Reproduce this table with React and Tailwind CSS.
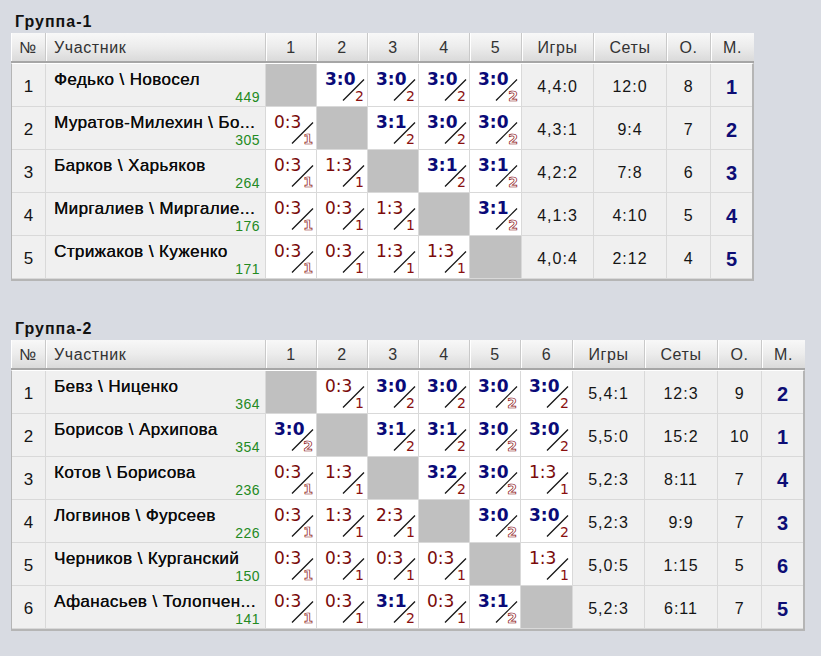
import React from 'react';

const group1 = [
  ['Федько \\ Новосел', '449', ['x', '3:0 2', '3:0 2', '3:0 2', '3:0 2*'], '4,4:0', '12:0', '8', '1'],
  ['Муратов-Милехин \\ Бо...', '305', ['0:3 1*', 'x', '3:1 2', '3:0 2', '3:0 2*'], '4,3:1', '9:4', '7', '2'],
  ['Барков \\ Харьяков', '264', ['0:3 1*', '1:3 1', 'x', '3:1 2', '3:1 2*'], '4,2:2', '7:8', '6', '3'],
  ['Миргалиев \\ Миргалие...', '176', ['0:3 1*', '0:3 1', '1:3 1', 'x', '3:1 2*'], '4,1:3', '4:10', '5', '4'],
  ['Стрижаков \\ Куженко', '171', ['0:3 1*', '0:3 1', '1:3 1', '1:3 1', 'x'], '4,0:4', '2:12', '4', '5'],
];

const group2 = [
  ['Бевз \\ Ниценко', '364', ['x', '0:3 1', '3:0 2', '3:0 2', '3:0 2*', '3:0 2'], '5,4:1', '12:3', '9', '2'],
  ['Борисов \\ Архипова', '354', ['3:0 2*', 'x', '3:1 2', '3:1 2', '3:0 2*', '3:0 2'], '5,5:0', '15:2', '10', '1'],
  ['Котов \\ Борисова', '236', ['0:3 1*', '1:3 1', 'x', '3:2 2', '3:0 2*', '1:3 1'], '5,2:3', '8:11', '7', '4'],
  ['Логвинов \\ Фурсеев', '226', ['0:3 1*', '1:3 1', '2:3 1', 'x', '3:0 2*', '3:0 2'], '5,2:3', '9:9', '7', '3'],
  ['Черников \\ Курганский', '150', ['0:3 1*', '0:3 1', '0:3 1', '0:3 1', 'x', '1:3 1'], '5,0:5', '1:15', '5', '6'],
  ['Афанасьев \\ Толопчен...', '141', ['0:3 1*', '0:3 1', '3:1 2', '0:3 1', '3:1 2*', 'x'], '5,2:3', '6:11', '7', '5'],
];

const ScoreCell = ({ value }) => {
  if (value === 'x') {
    return <div className="w-full h-[43px] bg-[#c0c0c0] border-r border-b border-[#d9d9d9]" />;
  }
  const [score, pt] = value.split(' ');
  const outlined = pt.endsWith('*');
  const digit = pt[0];
  const win = score.startsWith('3');
  return (
    <div className="relative w-full h-[43px] bg-white border-r border-b border-[#d9d9d9] font-['DejaVu_Sans',sans-serif]">
      <span
        className={`absolute left-[8px] top-[4px] text-[17px] leading-[22px] ${
          win ? 'font-bold text-[#0a0a78]' : 'text-[#7a0a0a]'
        }`}
      >
        {score}
      </span>
      <svg className="absolute left-[25px] top-[14px]" width="24" height="24" viewBox="0 0 24 24">
        <line x1="1" y1="22.5" x2="22" y2="1.5" stroke="#111" strokeWidth="1.2" />
      </svg>
      <span
        className={`absolute right-[3px] bottom-[1px] text-[14px] leading-[17px] ${
          outlined ? 'font-bold text-white [-webkit-text-stroke:0.7px_#8a1010]' : 'text-[#8a1010]'
        }`}
      >
        {digit}
      </span>
    </div>
  );
};

const HeadCell = ({ className, children }) => (
  <div
    className={`h-full shrink-0 flex items-center justify-center pt-[2px] border-r border-[#c9c9c9] shadow-[inset_1px_0_0_#ffffff] ${className}`}
  >
    {children}
  </div>
);

const Group = ({ title, rows }) => {
  const cols = rows.length;
  return (
    <div>
      <div className="h-[23px] pl-[4px] text-[16px] font-bold text-[#111] tracking-[1px]">{title}</div>
      <div className="inline-block">
        <div className="flex h-[30px] bg-gradient-to-b from-[#f8f8f8] via-[#ececec] to-[#dadada] border-b-2 border-b-[#a6a6a6] text-[16px] text-[#333] tracking-[0.6px]">
          <HeadCell className="w-[35px]">№</HeadCell>
          <HeadCell className="w-[220px] !justify-start pl-[8px]">Участник</HeadCell>
          {rows.map((_, i) => (
            <HeadCell key={i} className={i === cols - 1 ? 'w-[52px]' : 'w-[51px]'}>
              {i + 1}
            </HeadCell>
          ))}
          <HeadCell className="w-[72px]">Игры</HeadCell>
          <HeadCell className="w-[73px]">Сеты</HeadCell>
          <HeadCell className="w-[44px]">О.</HeadCell>
          <HeadCell className="w-[43px] !border-r-0">М.</HeadCell>
        </div>
        <div className="border-l border-r-2 border-b-2 border-[#b5b5b5] border-t border-t-white">
          {rows.map((r, ri) => (
            <div key={ri} className="flex bg-[#f0f0f0] text-[#151515]">
              <div className="w-[34px] h-[43px] shrink-0 flex items-center justify-center border-r border-b border-[#d9d9d9] text-[17px] pt-[4px]">
                {ri + 1}
              </div>
              <div className="relative w-[220px] h-[43px] shrink-0 border-r border-b border-[#d9d9d9]">
                <div className="absolute left-[8px] top-[6px] text-[17px] leading-[20px] tracking-[0.4px] text-[#0c0c0c] whitespace-nowrap [text-shadow:0.2px_0_0_#0c0c0c]">
                  {r[0]}
                </div>
                <div className="absolute right-[5px] bottom-[1px] text-[14px] leading-[16px] tracking-[0.5px] text-[#238a23]">
                  {r[1]}
                </div>
              </div>
              {r[2].map((c, ci) => (
                <div key={ci} className={`shrink-0 ${ci === cols - 1 ? 'w-[52px]' : 'w-[51px]'}`}>
                  <ScoreCell value={c} />
                </div>
              ))}
              <div className="w-[72px] h-[43px] shrink-0 flex items-center justify-center border-r border-b border-[#d9d9d9] text-[16px] tracking-[1px] pt-[4px]">
                {r[3]}
              </div>
              <div className="w-[73px] h-[43px] shrink-0 flex items-center justify-center border-r border-b border-[#d9d9d9] text-[16px] tracking-[1px] pt-[4px]">
                {r[4]}
              </div>
              <div className="w-[44px] h-[43px] shrink-0 flex items-center justify-center border-r border-b border-[#d9d9d9] text-[16px] tracking-[0.5px] pt-[4px]">
                {r[5]}
              </div>
              <div className="w-[41px] h-[43px] shrink-0 flex items-center justify-center border-b border-[#d9d9d9] text-[20px] font-bold text-[#0d0d75] pt-[4px]">
                {r[6]}
              </div>
            </div>
          ))}
        </div>
      </div>
    </div>
  );
};

export default function App() {
  return (
    <div className="w-[821px] h-[656px] overflow-hidden bg-[#d8dbe2] pl-[11px] pt-[10px] font-['Liberation_Sans',Arial,sans-serif]">
      <Group title="Группа-1" rows={group1} />
      <div className="h-[36px]" />
      <Group title="Группа-2" rows={group2} />
    </div>
  );
}
